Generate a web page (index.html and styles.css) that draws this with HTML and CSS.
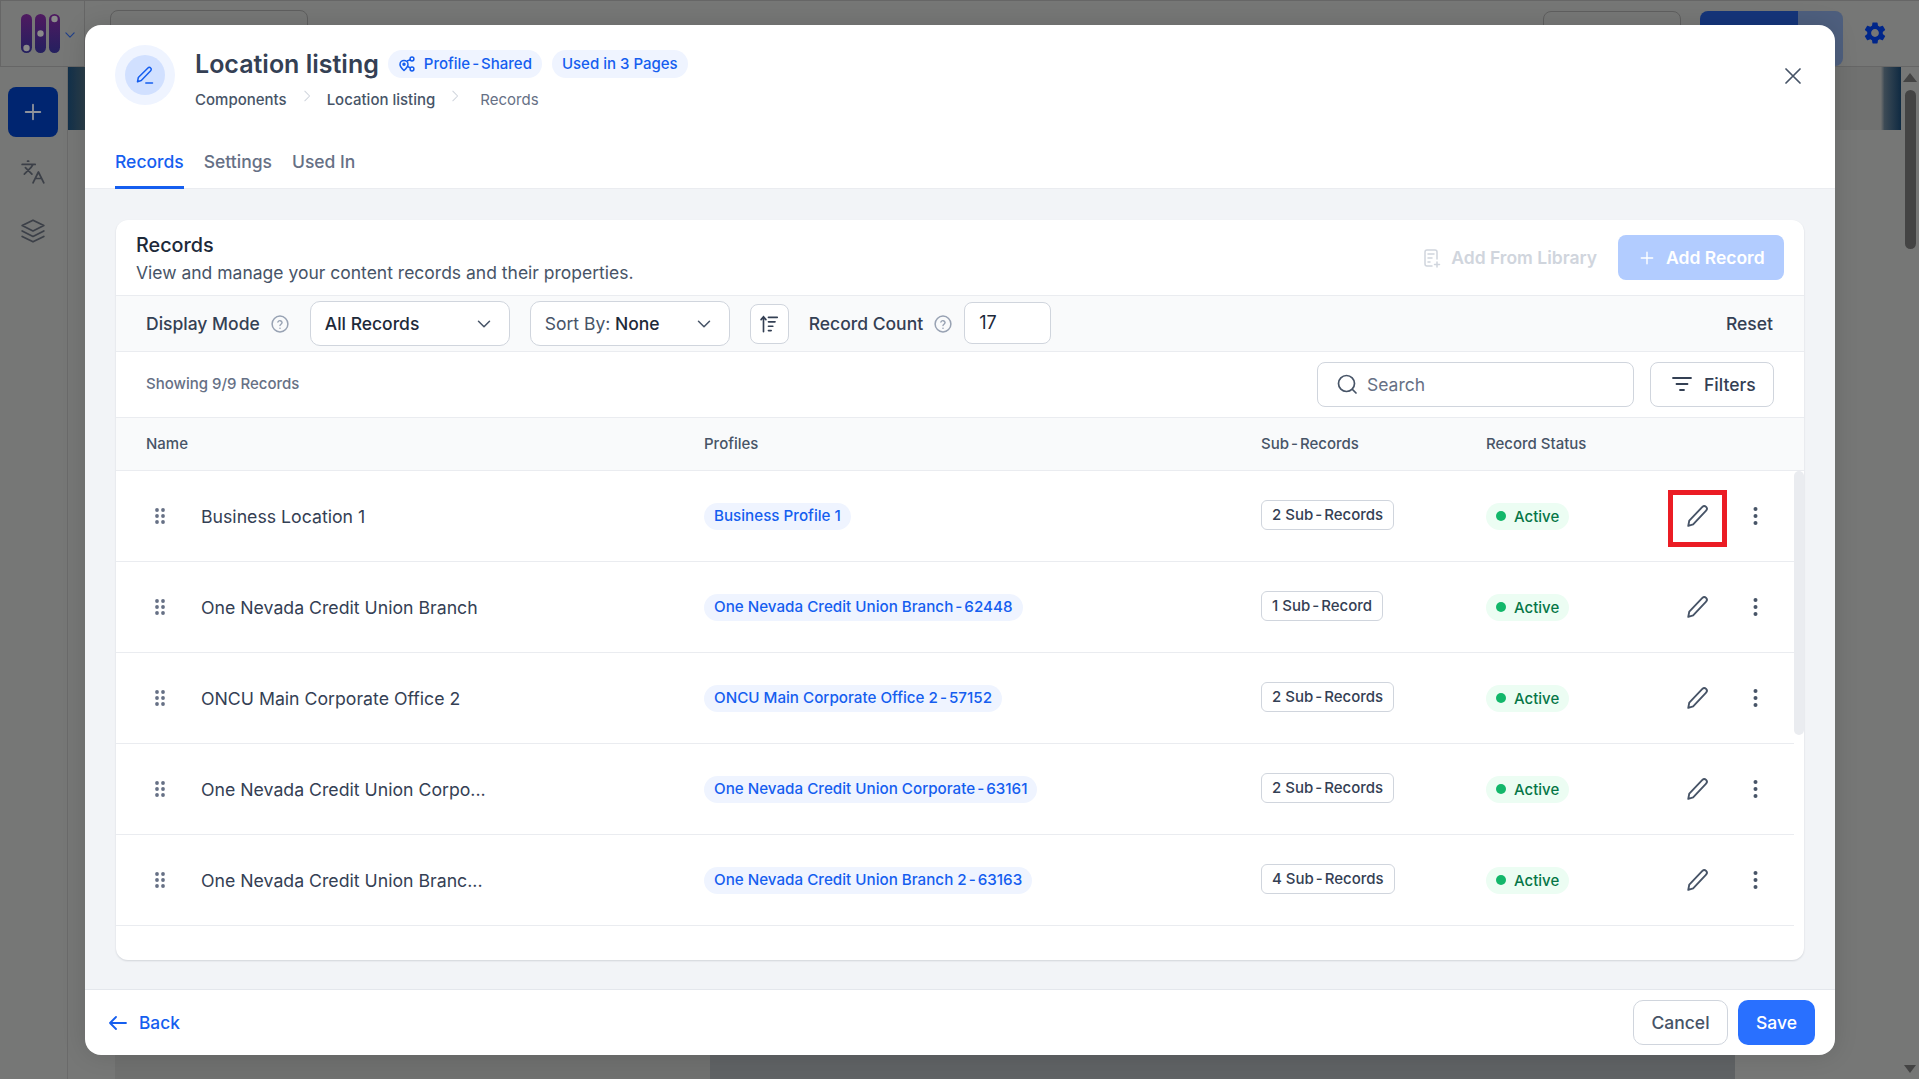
FILE: index.html
```html
<!DOCTYPE html>
<html lang="en">
<head>
    <meta charset="UTF-8">
    <title>Location listing - Records</title>
    <link rel="stylesheet" href="styles.css">
</head>
<body>
    <svg class="sprite">
        <symbol id="i-edit" viewBox="0 0 24 24"><path d="M4.5 20.5l.9-4.6L16.6 4.2a2.3 2.3 0 013.2 0 2.3 2.3 0 010 3.2L8.7 19.2z" fill="none" stroke="currentColor" stroke-width="1.6" stroke-linejoin="round"/></symbol>
        <symbol id="i-chevron" viewBox="0 0 16 16"><path d="M2.5 5.2L8 10.8l5.5-5.6" fill="none" stroke="currentColor" stroke-width="1.5" stroke-linecap="round" stroke-linejoin="round"/></symbol>
        <symbol id="i-crumb" viewBox="0 0 16 16"><path d="M5.5 2.5L11 8l-5.5 5.5" fill="none" stroke="currentColor" stroke-width="1.2" stroke-linecap="round" stroke-linejoin="round"/></symbol>
        <symbol id="i-help" viewBox="0 0 18 18"><circle cx="9" cy="9" r="7.9" fill="none" stroke="currentColor" stroke-width="1.5"/><path d="M6.9 7a2.2 2.2 0 014.2.6c0 1.4-2.1 1.8-2.1 3" fill="none" stroke="currentColor" stroke-width="1.4" stroke-linecap="round"/><circle cx="9" cy="13.2" r=".8" fill="currentColor"/></symbol>
        <symbol id="i-plus" viewBox="0 0 16 16"><path d="M8 1.5v13M1.5 8h13" fill="none" stroke="currentColor" stroke-width="1.6" stroke-linecap="round"/></symbol>
        <symbol id="i-drag" viewBox="0 0 10 16"><g fill="currentColor"><circle cx="2" cy="2" r="1.9"/><circle cx="8" cy="2" r="1.9"/><circle cx="2" cy="8" r="1.9"/><circle cx="8" cy="8" r="1.9"/><circle cx="2" cy="14" r="1.9"/><circle cx="8" cy="14" r="1.9"/></g></symbol>
        <symbol id="i-dots" viewBox="0 0 4 18"><g fill="currentColor"><circle cx="2" cy="2" r="2"/><circle cx="2" cy="9" r="2"/><circle cx="2" cy="16" r="2"/></g></symbol>
    </svg>

    <div class="page">
        <header class="topbar">
            <div class="logo-box">
                <svg class="logo" width="42" height="40" viewBox="0 0 42 40">
                    <defs><linearGradient id="logo-fill" x1="0" y1="0" x2="0" y2="1"><stop offset="0" stop-color="#4f1a60"/><stop offset="1" stop-color="#24205f"/></linearGradient></defs>
                    <rect x="0" y="0" width="11" height="39" rx="5.5" fill="url(#logo-fill)"/>
                    <rect x="14" y="0" width="11" height="39" rx="5.5" fill="url(#logo-fill)"/>
                    <rect x="28" y="0" width="11" height="39" rx="5.5" fill="url(#logo-fill)"/>
                    <circle cx="5.5" cy="34" r="3.2" fill="#8a8a8a"/>
                    <circle cx="19.5" cy="19.5" r="3.2" fill="#8a8a8a"/>
                    <circle cx="33.5" cy="5" r="3.2" fill="#8a8a8a"/>
                </svg>
                <svg class="logo-caret" width="12" height="12"><use href="#i-chevron"/></svg>
            </div>
            <div class="top-field"></div>
            <div class="top-outline"></div>
            <div class="top-publish"><span class="top-publish-main"></span><span class="top-publish-side"></span></div>
            <svg class="gear" width="26" height="26" viewBox="0 0 24 24"><path fill="#00268a" d="M19.14 12.94c.04-.3.06-.61.06-.94 0-.32-.02-.64-.07-.94l2.03-1.58a.49.49 0 0 0 .12-.61l-1.92-3.32a.488.488 0 0 0-.59-.22l-2.39.96c-.5-.38-1.03-.7-1.62-.94l-.36-2.54a.484.484 0 0 0-.48-.41h-3.84c-.24 0-.43.17-.47.41l-.36 2.54c-.59.24-1.13.57-1.62.94l-2.39-.96c-.22-.08-.47 0-.59.22L2.74 8.87c-.12.21-.08.47.12.61l2.03 1.58c-.05.3-.09.63-.09.94s.02.64.07.94l-2.03 1.58a.49.49 0 0 0-.12.61l1.92 3.32c.12.22.37.29.59.22l2.39-.96c.5.38 1.03.7 1.62.94l.36 2.54c.05.24.24.41.48.41h3.84c.24 0 .44-.17.47-.41l.36-2.54c.59-.24 1.13-.56 1.62-.94l2.39.96c.22.08.47 0 .59-.22l1.92-3.32c.12-.22.07-.47-.12-.61l-2.01-1.58zM12 15.6c-1.98 0-3.6-1.62-3.6-3.6s1.62-3.6 3.6-3.6 3.6 1.62 3.6 3.6-1.62 3.6-3.6 3.6z"/></svg>
        </header>
        <div class="page-body">
            <aside class="sidebar">
                <div class="side-add"><svg width="18" height="18"><use href="#i-plus"/></svg></div>
                <svg class="side-icon" width="26" height="26" viewBox="0 0 24 24" fill="none" stroke="currentColor" stroke-width="1.6" stroke-linecap="round" stroke-linejoin="round"><path d="M5 8l6 6M4 14l6-6 2-3M2 5h12M7 2h1M22 22l-5-10-5 10M14 18h6"/></svg>
                <svg class="side-icon" width="26" height="26" viewBox="0 0 24 24" fill="none" stroke="currentColor" stroke-width="1.6" stroke-linecap="round" stroke-linejoin="round"><path d="M12 2L2 7l10 5 10-5-10-5zM2 12l10 5 10-5M2 17l10 5 10-5"/></svg>
            </aside>
            <main class="page-main">
                <div class="banner"></div>
                <div class="page-lower"><div class="lower-left"></div><div class="lower-dark"></div></div>
            </main>
            <div class="page-scroll">
                <span class="arrow-up"></span>
                <span class="thumb"></span>
                <span class="arrow-down"></span>
            </div>
        </div>
    </div>

    <div class="modal">
        <div class="modal-head">
            <div class="head-icon">
                <div class="head-icon-inner">
                    <svg width="20" height="20" viewBox="0 0 24 24" fill="none" stroke="#155eef" stroke-width="1.8" stroke-linecap="round" stroke-linejoin="round"><path d="M3 20l1-5L15.5 3.5a2.3 2.3 0 013.3 0 2.3 2.3 0 010 3.3L7.5 18.5z"/><path d="M13 21.5h8"/></svg>
                </div>
            </div>
            <div class="head-text">
                <div class="title-row">
                    <h1>Location listing</h1>
                    <span class="pill">
                        <svg width="18" height="18" viewBox="0 0 18 18" fill="none" stroke="currentColor" stroke-width="1.5"><path d="M6 15.5C3.8 13.4 2 11.6 2 9.4a4 4 0 018 0c0 2.2-1.8 4-4 6.1z" stroke-linejoin="round"/><circle cx="6" cy="9.3" r="1" fill="currentColor"/><circle cx="14" cy="4" r="1.9"/><circle cx="14" cy="14" r="1.9"/><path d="M9 6l3.4-1.2M9.6 11.5l2.8 1.4"/></svg>
                        <span>Profile<span class="hy">-</span>Shared</span>
                    </span>
                    <span class="pill">Used in 3 Pages</span>
                </div>
                <nav class="crumbs">
                    <span>Components</span>
                    <svg width="14" height="14"><use href="#i-crumb"/></svg>
                    <span>Location listing</span>
                    <svg class="crumb-last" width="14" height="14"><use href="#i-crumb"/></svg>
                    <span class="crumb-current">Records</span>
                </nav>
            </div>
            <svg class="close" width="16" height="16" viewBox="0 0 16 16"><path d="M1 1l14 14M15 1L1 15" stroke="#475467" stroke-width="1.7" stroke-linecap="round"/></svg>
        </div>

        <div class="tabs">
            <a class="tab active">Records</a>
            <a class="tab">Settings</a>
            <a class="tab">Used In</a>
        </div>

        <div class="modal-body">
            <section class="card">
                <div class="card-head">
                    <div>
                        <h2>Records</h2>
                        <p>View and manage your content records and their properties.</p>
                    </div>
                    <div class="card-actions">
                        <span class="lib-link">
                            <svg width="18" height="20" viewBox="0 0 18 20" fill="none" stroke="currentColor" stroke-width="1.5" stroke-linecap="round"><path d="M9 18H4a2 2 0 01-2-2V4a2 2 0 012-2h8a2 2 0 012 2v7"/><path d="M5 6h6M5 10h4M5 14h2M14 14v5M11.5 16.5h5"/></svg>
                            Add From Library
                        </span>
                        <span class="add-btn"><svg width="14" height="14"><use href="#i-plus"/></svg>Add Record</span>
                    </div>
                </div>

                <div class="toolbar">
                    <span class="tool-label">Display Mode</span>
                    <svg class="help" width="18" height="18"><use href="#i-help"/></svg>
                    <div class="select"><span>All Records</span><svg width="16" height="16"><use href="#i-chevron"/></svg></div>
                    <div class="select sort"><span><em>Sort By:</em> None</span><svg width="16" height="16"><use href="#i-chevron"/></svg></div>
                    <div class="sort-btn">
                        <svg width="22" height="22" viewBox="0 0 20 20" fill="none" stroke="#344054" stroke-width="1.5" stroke-linecap="round"><path d="M5 17V3.5M2.8 6L5 3.5 7.2 6M9.5 4h8M9.5 8h6M9.5 12h4M9.5 16h2.5"/></svg>
                    </div>
                    <span class="tool-label count-label">Record Count</span>
                    <svg class="help" width="18" height="18"><use href="#i-help"/></svg>
                    <div class="count-input">17</div>
                    <span class="reset">Reset</span>
                </div>

                <div class="list-bar">
                    <span class="showing">Showing 9/9 Records</span>
                    <div class="search">
                        <svg width="22" height="22" viewBox="0 0 22 22" fill="none" stroke="#475467" stroke-width="1.7" stroke-linecap="round"><circle cx="10.5" cy="10.5" r="8"/><path d="M16.5 16.5l3.5 3.5"/></svg>
                        <span>Search</span>
                    </div>
                    <div class="filters">
                        <svg width="20" height="18" viewBox="0 0 20 18" fill="none" stroke="#344054" stroke-width="1.8" stroke-linecap="round"><path d="M1 3h18M4.5 9h11M8 15h4"/></svg>
                        Filters
                    </div>
                </div>

                <div class="table-head">
                    <span>Name</span>
                    <span>Profiles</span>
                    <span>Sub<span class="hy">-</span>Records</span>
                    <span>Record Status</span>
                </div>

                <div class="table-wrap">
                    <div class="rows">
                        <div class="row">
                            <div class="cell-name"><svg class="drag" width="12" height="16"><use href="#i-drag"/></svg>Business Location 1</div>
                            <div><span class="chip">Business Profile 1</span></div>
                            <div><span class="sub-tag">2 Sub<span class="hy">-</span>Records</span></div>
                            <div><span class="status"><i></i>Active</span></div>
                            <div class="row-actions">
                                <span class="edit-wrap"><svg width="28" height="28"><use href="#i-edit"/></svg><span class="highlight"></span></span>
                                <svg class="more" width="5" height="18"><use href="#i-dots"/></svg>
                            </div>
                        </div>
                        <div class="row">
                            <div class="cell-name"><svg class="drag" width="12" height="16"><use href="#i-drag"/></svg>One Nevada Credit Union Branch</div>
                            <div><span class="chip">One Nevada Credit Union Branch<span class="hy">-</span>62448</span></div>
                            <div><span class="sub-tag">1 Sub<span class="hy">-</span>Record</span></div>
                            <div><span class="status"><i></i>Active</span></div>
                            <div class="row-actions">
                                <span class="edit-wrap"><svg width="28" height="28"><use href="#i-edit"/></svg></span>
                                <svg class="more" width="5" height="18"><use href="#i-dots"/></svg>
                            </div>
                        </div>
                        <div class="row">
                            <div class="cell-name"><svg class="drag" width="12" height="16"><use href="#i-drag"/></svg>ONCU Main Corporate Office 2</div>
                            <div><span class="chip">ONCU Main Corporate Office 2<span class="hy">-</span>57152</span></div>
                            <div><span class="sub-tag">2 Sub<span class="hy">-</span>Records</span></div>
                            <div><span class="status"><i></i>Active</span></div>
                            <div class="row-actions">
                                <span class="edit-wrap"><svg width="28" height="28"><use href="#i-edit"/></svg></span>
                                <svg class="more" width="5" height="18"><use href="#i-dots"/></svg>
                            </div>
                        </div>
                        <div class="row">
                            <div class="cell-name"><svg class="drag" width="12" height="16"><use href="#i-drag"/></svg>One Nevada Credit Union Corpo...</div>
                            <div><span class="chip">One Nevada Credit Union Corporate<span class="hy">-</span>63161</span></div>
                            <div><span class="sub-tag">2 Sub<span class="hy">-</span>Records</span></div>
                            <div><span class="status"><i></i>Active</span></div>
                            <div class="row-actions">
                                <span class="edit-wrap"><svg width="28" height="28"><use href="#i-edit"/></svg></span>
                                <svg class="more" width="5" height="18"><use href="#i-dots"/></svg>
                            </div>
                        </div>
                        <div class="row">
                            <div class="cell-name"><svg class="drag" width="12" height="16"><use href="#i-drag"/></svg>One Nevada Credit Union Branc...</div>
                            <div><span class="chip">One Nevada Credit Union Branch 2<span class="hy">-</span>63163</span></div>
                            <div><span class="sub-tag">4 Sub<span class="hy">-</span>Records</span></div>
                            <div><span class="status"><i></i>Active</span></div>
                            <div class="row-actions">
                                <span class="edit-wrap"><svg width="28" height="28"><use href="#i-edit"/></svg></span>
                                <svg class="more" width="5" height="18"><use href="#i-dots"/></svg>
                            </div>
                        </div>
                    </div>
                    <div class="list-scroll"><span></span></div>
                </div>
            </section>
        </div>

        <div class="modal-foot">
            <span class="back">
                <svg width="20" height="16" viewBox="0 0 20 16" fill="none" stroke="currentColor" stroke-width="1.8" stroke-linecap="round" stroke-linejoin="round"><path d="M18 8H2M8 2L2 8l6 6"/></svg>
                Back
            </span>
            <div class="foot-actions">
                <span class="btn-cancel">Cancel</span>
                <span class="btn-save">Save</span>
            </div>
        </div>
    </div>
</body>
</html>
```

FILE: styles.css
```css
* { box-sizing: border-box; }

body {
    margin: 0;
    width: 1919px;
    height: 1079px;
    overflow: hidden;
    position: relative;
    background: #767776;
    font-family: Inter, "Noto Sans", sans-serif;
    color: #344054;
}

.sprite { position: absolute; width: 0; height: 0; }
.hy { margin: 0 2px; }

/* dimmed page behind the modal */
.page { display: flex; flex-direction: column; height: 100%; }

.topbar {
    display: flex;
    align-items: flex-start;
    height: 67px;
    flex-shrink: 0;
    border-top: 1px solid #666;
    border-bottom: 1px solid #666;
}
.logo-box {
    display: flex;
    align-items: center;
    gap: 1px;
    width: 85px;
    height: 65px;
    padding-left: 20px;
    border-left: 1px solid #666;
    border-right: 1px solid #666;
}
.logo-caret { color: #1f3f8a; margin-top: 2px; }
.top-field {
    width: 198px;
    height: 40px;
    margin: 9px 0 0 25px;
    border: 1px solid #5f5f5f;
    border-radius: 8px;
}
.top-outline {
    width: 138px;
    height: 40px;
    margin: 10px 0 0 1235px;
    border: 1px solid #5f5f5f;
    border-radius: 8px;
}
.top-publish {
    display: flex;
    width: 143px;
    height: 55px;
    margin: 10px 0 0 19px;
    border-radius: 8px;
    overflow: hidden;
}
.top-publish-main { width: 98px; background: #15357a; }
.top-publish-side { flex: 1; background: #4e5f7e; }
.gear { margin: 19px 0 0 19px; }

.page-body { display: flex; flex: 1; min-height: 0; }

.sidebar {
    display: flex;
    flex-direction: column;
    align-items: center;
    gap: 33px;
    width: 68px;
    padding-top: 20px;
    border-right: 1px solid #6a6a6a;
    flex-shrink: 0;
}
.side-add {
    display: flex;
    align-items: center;
    justify-content: center;
    width: 50px;
    height: 50px;
    margin-left: -2px;
    margin-bottom: -11px;
    border-radius: 8px;
    background: #002570;
    color: #8f939b;
}
.side-icon { color: #3c4048; margin-left: -2px; }

.page-main {
    display: flex;
    flex-direction: column;
    justify-content: space-between;
    flex: 1;
}
.banner {
    height: 63px;
    background: linear-gradient(90deg, #12304a 0, #2e3f48 1%, #707170 1.2%, #707170 98.9%, #3c4a55 99.1%, #0f2a42 100%);
}
.page-lower { display: flex; height: 60px; padding-left: 47px; }
.lower-left { width: 595px; background: #6f706f; }
.lower-dark { width: 1025px; background: #5f6264; }

.page-scroll {
    display: flex;
    flex-direction: column;
    align-items: center;
    width: 18px;
    padding-top: 6px;
    flex-shrink: 0;
}
.arrow-up { border: 7px solid transparent; border-top: 0; border-bottom: 9px solid #444; }
.thumb { width: 11px; height: 159px; margin-top: 8px; border-radius: 6px; background: #444; }
.arrow-down { margin-top: auto; margin-bottom: 6px; border: 6px solid transparent; border-bottom: 0; border-top: 8px solid #444; }

/* modal */
.modal {
    position: absolute;
    left: 85px;
    top: 25px;
    width: 1750px;
    height: 1030px;
    display: flex;
    flex-direction: column;
    background: #fff;
    border-radius: 16px;
    overflow: hidden;
    box-shadow: 0 0 24px rgba(0, 0, 0, 0.12);
}

.modal-head {
    display: flex;
    position: relative;
    height: 115px;
    padding-left: 30px;
    flex-shrink: 0;
}
.head-icon {
    display: flex;
    align-items: center;
    justify-content: center;
    width: 60px;
    height: 60px;
    margin-top: 20px;
    border-radius: 50%;
    background: #eff4ff;
}
.head-icon-inner {
    display: flex;
    align-items: center;
    justify-content: center;
    width: 40px;
    height: 40px;
    border-radius: 50%;
    background: #d1e0ff;
}
.head-text { margin-left: 20px; padding-top: 25px; }
.title-row { display: flex; align-items: center; height: 28px; }
.title-row h1 {
    margin: 0 9px 0 0;
    font-size: 25px;
    font-weight: 600;
    line-height: 28px;
    color: #344054;
}
.pill {
    display: inline-flex;
    align-items: center;
    gap: 8px;
    height: 28px;
    padding: 0 10px 1px;
    margin-right: 10px;
    border-radius: 14px;
    background: #eff4ff;
    color: #155eef;
    font-size: 15px;
    font-weight: 500;
}
.crumbs {
    display: flex;
    align-items: center;
    height: 20px;
    margin-top: 11px;
    font-size: 15px;
    font-weight: 500;
    color: #475467;
}
.crumbs svg { margin: -6px 13px 0 13px; color: #d0d5dd; }
.crumbs svg.crumb-last { margin-right: 18px; }
.crumb-current { color: #667085; font-weight: 400; }
.close { position: absolute; top: 43px; right: 34px; }

.tabs {
    display: flex;
    gap: 20px;
    padding-left: 30px;
    height: 49px;
    flex-shrink: 0;
    border-bottom: 1px solid #eaecf0;
}
.tab {
    height: 49px;
    padding-top: 10px;
    font-size: 17.5px;
    font-weight: 500;
    line-height: 24px;
    color: #667085;
    border-bottom: 3px solid transparent;
}
.tab.active { color: #155eef; border-bottom-color: #155eef; }

.modal-body {
    flex: 1;
    min-height: 0;
    padding: 31px 31px 29px 31px;
    background: #f2f4f7;
}

.card {
    display: flex;
    flex-direction: column;
    height: 100%;
    background: #fff;
    border-radius: 12px;
    overflow: hidden;
    box-shadow: 0 1px 2px rgba(16, 24, 40, 0.14);
}

.card-head {
    display: flex;
    justify-content: space-between;
    align-items: flex-start;
    height: 75px;
    padding: 13px 20px 0 20px;
    flex-shrink: 0;
}
.card-head h2 {
    margin: 0;
    font-size: 19.8px;
    font-weight: 500;
    line-height: 24px;
    color: #1d2939;
}
.card-head p {
    margin: 4px 0 0;
    font-size: 17.5px;
    line-height: 24px;
    color: #475467;
}
.card-actions { display: flex; align-items: center; gap: 21px; margin-top: 2px; }
.lib-link {
    display: flex;
    align-items: center;
    gap: 10px;
    font-size: 17.5px;
    font-weight: 600;
    color: #d0d5dd;
}
.add-btn {
    display: flex;
    align-items: center;
    gap: 12px;
    width: 166px;
    height: 45px;
    padding-left: 22px;
    border-radius: 8px;
    background: #b2ccff;
    color: #fff;
    font-size: 17.5px;
    font-weight: 600;
}

.toolbar {
    display: flex;
    align-items: center;
    height: 57px;
    padding-left: 30px;
    flex-shrink: 0;
    background: #f9fafb;
    border-top: 1px solid #eaecf0;
    border-bottom: 1px solid #eaecf0;
}
.tool-label { font-size: 17.5px; font-weight: 500; color: #344054; }
.help { margin-left: 11px; color: #98a2b3; }
.select {
    display: flex;
    align-items: center;
    justify-content: space-between;
    width: 200px;
    height: 45px;
    margin-left: 21px;
    padding: 0 17px 0 14px;
    background: #fff;
    border: 1px solid #d0d5dd;
    border-radius: 10px;
    font-size: 17.5px;
    font-weight: 500;
    color: #1d2939;
}
.select svg { color: #475467; }
.select em { font-style: normal; font-weight: 400; color: #475467; }
.select.sort { margin-left: 20px; }
.sort-btn {
    display: flex;
    align-items: center;
    justify-content: center;
    width: 39px;
    height: 40px;
    margin-left: 20px;
    background: #fff;
    border: 1px solid #d0d5dd;
    border-radius: 8px;
}
.count-label { margin-left: 20px; }
.count-input {
    width: 87px;
    height: 42px;
    margin: -2px 0 0 12px;
    padding-left: 14px;
    background: #fff;
    border: 1px solid #d0d5dd;
    border-radius: 8px;
    font-size: 18px;
    line-height: 40px;
    color: #1d2939;
}
.reset {
    margin-left: auto;
    padding-right: 31px;
    font-size: 17.5px;
    font-weight: 500;
    color: #344054;
}

.list-bar {
    display: flex;
    align-items: center;
    height: 66px;
    padding: 0 30px 1px 30px;
    flex-shrink: 0;
    border-bottom: 1px solid #eaecf0;
}
.showing { margin: -2px auto 0 0; font-size: 15px; font-weight: 500; color: #667085; }
.search {
    display: flex;
    align-items: center;
    gap: 9px;
    width: 317px;
    height: 45px;
    padding-left: 18px;
    border: 1px solid #d0d5dd;
    border-radius: 8px;
    font-size: 17.5px;
    color: #667085;
}
.filters {
    display: flex;
    align-items: center;
    gap: 12px;
    width: 124px;
    height: 45px;
    margin-left: 16px;
    padding-left: 21px;
    border: 1px solid #d0d5dd;
    border-radius: 8px;
    font-size: 17.5px;
    font-weight: 500;
}

.table-head, .row {
    display: grid;
    grid-template-columns: 558px 557px 225px 182px 1fr;
    align-items: center;
    padding-left: 30px;
}
.table-head {
    height: 53px;
    padding-bottom: 2px;
    flex-shrink: 0;
    background: #f9fafb;
    border-bottom: 1px solid #eaecf0;
    font-size: 15px;
    font-weight: 500;
    color: #475467;
}

.table-wrap { display: flex; flex: 1; min-height: 0; }
.rows { flex: 1; }
.row { height: 91px; border-bottom: 1px solid #eaecf0; }
.cell-name { display: flex; align-items: center; font-size: 17.7px; font-weight: 400; color: #344054; }
.drag { margin: 0 35px 0 8px; color: #667085; }
.chip {
    display: inline-block;
    height: 27px;
    padding: 0 10px;
    border-radius: 14px;
    background: #eff4ff;
    color: #155eef;
    font-size: 15.2px;
    font-weight: 500;
    line-height: 26px;
    vertical-align: middle;
}
.sub-tag {
    display: inline-block;
    height: 30px;
    margin-top: -2px;
    padding: 0 10px;
    border: 1px solid #d0d5dd;
    border-radius: 6px;
    font-size: 15px;
    font-weight: 500;
    line-height: 28px;
    color: #344054;
    vertical-align: middle;
}
.status {
    display: inline-flex;
    align-items: center;
    gap: 8px;
    height: 27px;
    padding: 0 10px;
    border-radius: 14px;
    background: #ecfdf3;
    color: #067647;
    font-size: 15px;
    font-weight: 500;
    vertical-align: middle;
}
.status i { width: 10px; height: 10px; border-radius: 50%; background: #12b76a; }

.row-actions { display: flex; align-items: center; color: #475467; }
.edit-wrap {
    position: relative;
    display: flex;
    align-items: center;
    justify-content: center;
    width: 59px;
    height: 57px;
}
.edit-wrap svg { margin-left: -1px; }
.highlight {
    position: absolute;
    inset: 2px 0 -2px 0;
    border: 5px solid #eb1c24;
}
.more { margin-left: 26px; }

.list-scroll { width: 10px; flex-shrink: 0; }
.list-scroll span {
    display: block;
    height: 264px;
    background: #eaecf0;
    border-radius: 5px;
}

.modal-foot {
    display: flex;
    align-items: center;
    justify-content: space-between;
    height: 66px;
    padding: 0 20px 0 23px;
    flex-shrink: 0;
    border-top: 1px solid #e4e7ec;
}
.back {
    display: flex;
    align-items: center;
    gap: 11px;
    color: #155eef;
    font-size: 17.3px;
    font-weight: 500;
}
.foot-actions { display: flex; gap: 10px; }
.btn-cancel, .btn-save {
    display: flex;
    align-items: center;
    justify-content: center;
    height: 45px;
    border-radius: 10px;
    font-size: 17.5px;
    font-weight: 500;
}
.btn-cancel { width: 95px; border: 1px solid #d0d5dd; color: #475467; }
.btn-save { width: 77px; background: #2970ff; color: #fff; }
```
